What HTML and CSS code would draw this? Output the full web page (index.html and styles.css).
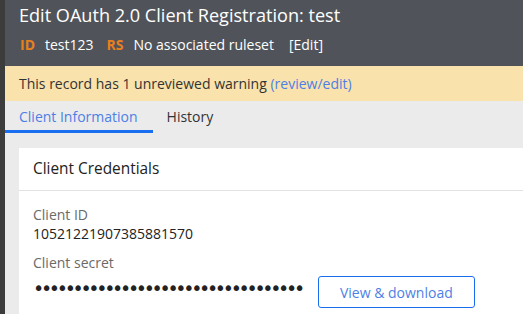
FILE: index.html
```html
<!DOCTYPE html>
<html lang="en">
<head>
    <meta charset="UTF-8">
    <title>Edit OAuth 2.0 Client Registration</title>
    <link rel="stylesheet" href="styles.css">
</head>
<body>
    <div class="shell">
        <div class="rail"></div>
        <div class="main">
            <div class="header">
                <h1>Edit OAuth 2.0 Client Registration: test</h1>
                <div class="meta">
                    <span class="tag">ID</span>
                    <span class="meta-value">test123</span>
                    <span class="tag">RS</span>
                    <span class="meta-value">No associated ruleset</span>
                    <span class="meta-edit">[Edit]</span>
                </div>
            </div>

            <div class="warning">
                This record has 1 unreviewed warning <a href="#">(review/edit)</a>
            </div>

            <div class="tabs">
                <div class="tab active">Client Information</div>
                <div class="tab">History</div>
            </div>

            <div class="content">
                <div class="card">
                    <div class="card-header">Client Credentials</div>
                    <div class="card-body">
                        <div class="field">
                            <div class="field-label">Client ID</div>
                            <div class="field-value">10521221907385881570</div>
                        </div>
                        <div class="field">
                            <div class="field-label">Client secret</div>
                            <div class="secret-row">
                                <div class="secret">••••••••••••••••••••••••••••••••••</div>
                                <button class="btn">View &amp; download</button>
                            </div>
                        </div>
                    </div>
                </div>
            </div>
        </div>
    </div>
</body>
</html>
```

FILE: styles.css
```css
:root {
    --rail: #3c3c3c;
    --header: #50545a;
    --warning: #f9e2ab;
    --tabs-bg: #ebebeb;
    --blue: #1a6ff0;
    --link: #4d7fe6;
    --orange: #e8801d;
    --text: #222222;
    --muted: #6a6a6a;
}

* {
    margin: 0;
    padding: 0;
    box-sizing: border-box;
}

body {
    font-family: 'Open Sans', sans-serif;
    font-size: 14px;
    color: var(--text);
    background: var(--tabs-bg);
    overflow: hidden;
}

.shell {
    display: flex;
    height: 314px;
}

.rail {
    width: 5px;
    background: var(--rail);
    flex-shrink: 0;
}

.main {
    flex: 1;
    min-width: 0;
}

.header {
    background: var(--header);
    color: #ffffff;
    height: 66px;
    padding: 2px 14px 0;
}

.header h1 {
    font-size: 18.1px;
    font-weight: 400;
    line-height: 26px;
    white-space: nowrap;
}

.meta {
    display: flex;
    align-items: center;
    margin-top: 8px;
    line-height: 18px;
    white-space: nowrap;
}

.tag {
    color: var(--orange);
    font-weight: 700;
    margin-left: 1px;
    margin-right: 10px;
}

.meta-value {
    margin-right: 12px;
}

.meta-edit {
    margin-left: 3px;
}

.warning {
    background: var(--warning);
    height: 35px;
    line-height: 35px;
    padding-left: 14px;
    color: #333333;
    white-space: nowrap;
}

.warning a {
    color: var(--link);
    text-decoration: none;
}

.tabs {
    display: flex;
    height: 32px;
}

.tab {
    padding: 0 15px 0 14px;
    line-height: 31px;
    color: #333333;
}

.tab.active {
    color: var(--link);
    border-bottom: 3px solid var(--blue);
}

.tab + .tab {
    padding-left: 14px;
}

.content {
    padding: 15px 0 0 14px;
}

.card {
    background: #ffffff;
    height: 166px;
}

.card-header {
    height: 43px;
    padding: 0 14px;
    line-height: 42px;
    font-size: 15.4px;
    border-bottom: 1px solid #e2e2e2;
}

.card-body {
    padding: 14px 14px 0;
}

.field {
    margin-bottom: 10px;
}

.field-label {
    color: var(--muted);
    line-height: 19px;
}

.field-value {
    line-height: 19px;
}

.secret-row {
    display: flex;
    align-items: center;
    gap: 16px;
}

.secret {
    font-family: 'DejaVu Sans', sans-serif;
    font-size: 19px;
    letter-spacing: -3.3px;
    line-height: 20px;
    margin-top: -4px;
    white-space: nowrap;
}

.btn {
    font-family: 'Open Sans', sans-serif;
    font-size: 14px;
    color: var(--link);
    background: #ffffff;
    border: 1px solid var(--blue);
    border-radius: 3px;
    width: 157px;
    height: 32px;
    margin-top: 4px;
}
```
